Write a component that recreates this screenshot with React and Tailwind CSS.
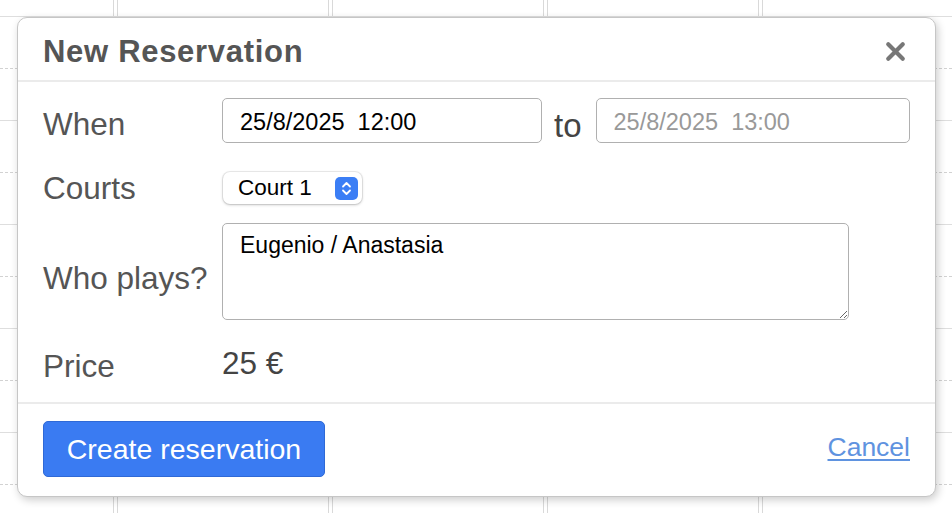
import { X } from 'lucide-react'

const COLS = [0, 1, 2, 3, 4]
const ROWS = Array.from({ length: 10 }, (_, i) => i)

function CalendarGrid() {
    return (
        <div className="flex flex-col">
            <div className="flex gap-[3px] h-[17px] border-b border-[#dedede]">
                {COLS.map(c => (
                    <div key={c} className={c === 0 ? 'w-[114px] shrink-0 border-r border-[#d9d9d9]' : 'w-[212px] shrink-0 border-x border-[#d9d9d9]'} />
                ))}
            </div>
            {ROWS.map(r => (
                <div key={r} className={`flex gap-[3px] h-[52px] border-b ${r % 2 === 0 ? 'border-dashed border-[#d2d2d2]' : 'border-solid border-[#dedede]'}`}>
                    {COLS.map(c => (
                        <div key={c} className={c === 0 ? 'w-[114px] shrink-0 border-r border-[#d9d9d9]' : 'w-[212px] shrink-0 border-x border-[#d9d9d9]'} />
                    ))}
                </div>
            ))}
        </div>
    )
}

function Stepper() {
    return (
        <div className="w-[23px] h-[23px] rounded-[5px] bg-[#3b7ef5] flex items-center justify-center">
            <svg width="11" height="15" viewBox="0 0 11 15" fill="none" stroke="white" strokeWidth="1.8" strokeLinecap="round" strokeLinejoin="round">
                <path d="M2 5.5 L5.5 2 L9 5.5" />
                <path d="M2 9.5 L5.5 13 L9 9.5" />
            </svg>
        </div>
    )
}

export default function App() {
    return (
        <div className="relative w-[952px] h-[513px] overflow-hidden bg-white" style={{ fontFamily: '"Liberation Sans", Arial, sans-serif' }}>
            <CalendarGrid />

            <div className="absolute left-[17px] top-[17px] w-[919px] bg-white border border-[#c6c6c6] rounded-[10px] shadow-[2px_3px_9px_rgba(0,0,0,0.2)] flex flex-col">
                {/* header */}
                <div className="h-[64px] flex items-start justify-between pl-[25px] pr-[25px] border-b-2 border-[#ebebeb]">
                    <h2 className="mt-[18px] text-[31px] leading-none font-bold text-[#555] tracking-[0.7px]">New Reservation</h2>
                    <button className="mt-[19px] text-[#777]">
                        <X size={29} strokeWidth={3.5} />
                    </button>
                </div>

                {/* body */}
                <div className="px-[25px] pt-[16px] pb-[23px] border-b-2 border-[#ebebeb] text-[31.5px] leading-none text-[#555]">
                    <div className="flex h-[45px]">
                        <span className="w-[179px] shrink-0 mt-[11px]">When</span>
                        <input
                            readOnly
                            value="25/8/2025  12:00"
                            className="w-[320px] h-[45px] px-[17px] pt-[3px] border border-[#b0b0b0] rounded-[5px] text-[23.5px] text-black outline-none"
                        />
                        <span className="ml-[12px] mr-[14px] mt-[11px] text-[33px] text-[#444]">to</span>
                        <input
                            readOnly
                            value="25/8/2025  13:00"
                            className="flex-1 min-w-0 h-[45px] px-[17px] pt-[3px] border border-[#b0b0b0] rounded-[5px] text-[23.5px] text-[#999] outline-none"
                        />
                    </div>

                    <div className="flex h-[32px] mt-[29px]">
                        <span className="w-[180px] shrink-0 mt-[1px]">Courts</span>
                        <div className="w-[139px] h-[32px] flex items-center justify-between pl-[15px] pr-[4px] bg-white rounded-[7px] shadow-[0_0_0_1px_rgba(0,0,0,0.07),0_1px_3px_rgba(0,0,0,0.22)]">
                            <span className="text-[22.5px] text-black">Court 1</span>
                            <Stepper />
                        </div>
                    </div>

                    <div className="flex h-[97px] mt-[19px]">
                        <span className="w-[179px] shrink-0 mt-[40px]">Who plays?</span>
                        <textarea
                            readOnly
                            value="Eugenio / Anastasia"
                            className="w-[627px] h-[97px] px-[17px] pt-[10px] border border-[#b0b0b0] rounded-[5px] text-[23px] text-black outline-none"
                        />
                    </div>

                    <div className="flex h-[31px] mt-[28px]">
                        <span className="w-[179px] shrink-0 mt-[3px]">Price</span>
                        <span className="text-[#444]">25 €</span>
                    </div>
                </div>

                {/* footer */}
                <div className="flex items-center justify-between pl-[25px] pr-[25px] pt-[17px] pb-[19px]">
                    <button className="w-[282px] h-[56px] rounded-[5px] bg-[#3a7bf2] border border-[#2f69d6] text-white text-[28.5px] leading-none">
                        Create reservation
                    </button>
                    <a href="#" className="text-[26.5px] text-[#5f93e0] underline underline-offset-[3px] mt-[-2px]">Cancel</a>
                </div>
            </div>
        </div>
    )
}
